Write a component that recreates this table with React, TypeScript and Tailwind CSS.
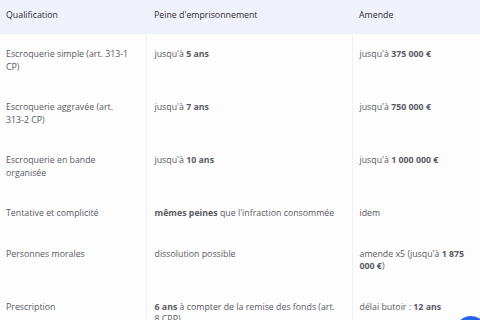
const rows: { q: React.ReactNode; p: React.ReactNode; a: React.ReactNode }[] = [
  {
    q: "Escroquerie simple (art. 313-1 CP)",
    p: <>jusqu'à <b>5 ans</b></>,
    a: <>jusqu'à <b>375 000 €</b></>,
  },
  {
    q: "Escroquerie aggravée (art. 313-2 CP)",
    p: <>jusqu'à <b>7 ans</b></>,
    a: <>jusqu'à <b>750 000 €</b></>,
  },
  {
    q: "Escroquerie en bande organisée",
    p: <>jusqu'à <b>10 ans</b></>,
    a: <>jusqu'à <b>1 000 000 €</b></>,
  },
  {
    q: "Tentative et complicité",
    p: <><b>mêmes peines</b> que l'infraction consommée</>,
    a: "idem",
  },
  {
    q: "Personnes morales",
    p: "dissolution possible",
    a: <>amende x5 (jusqu'à <b>1 875 000 €</b>)</>,
  },
  {
    q: "Prescription",
    p: <><b>6 ans</b> à compter de la remise des fonds (art. 8 CPP)</>,
    a: <>délai butoir : <b>12 ans</b></>,
  },
];

export default function App() {
  return (
    <div
      className="relative h-[320px] w-[480px] overflow-hidden bg-[#fdfdfe] text-[8.8px] leading-[12.5px] text-[#5a5a62]"
      style={{ fontFamily: '"Open Sans", sans-serif' }}
    >
      <table className="w-[500px] table-fixed border-collapse">
        <colgroup>
          <col className="w-[146px]" />
          <col className="w-[206px]" />
          <col className="w-[148px]" />
        </colgroup>
        <thead>
          <tr className="h-[34px] bg-[#eff1fb] text-left">
            <th className="px-[6px] pb-[4px] font-medium text-[#2e2e36]">Qualification</th>
            <th className="px-[8px] pb-[4px] font-medium text-[#2e2e36]">Peine d'emprisonnement</th>
            <th className="px-[7px] pb-[4px] font-medium text-[#2e2e36]">Amende</th>
          </tr>
        </thead>
        <tbody>
          {rows.map((r, i) => (
            <tr key={i} className="align-top">
              <td className="border-r border-[#f1f2f6] pl-[6px] pr-[15px] py-[14px]">{r.q}</td>
              <td className="border-r border-[#f1f2f6] pl-[8px] pr-[10px] py-[14px]">{r.p}</td>
              <td className="pl-[7px] pr-[29px] py-[14px]">{r.a}</td>
            </tr>
          ))}
        </tbody>
      </table>
      <div className="absolute left-[455px] top-[316px] h-[32px] w-[32px] rounded-full bg-[#2563eb]" />
    </div>
  );
}
